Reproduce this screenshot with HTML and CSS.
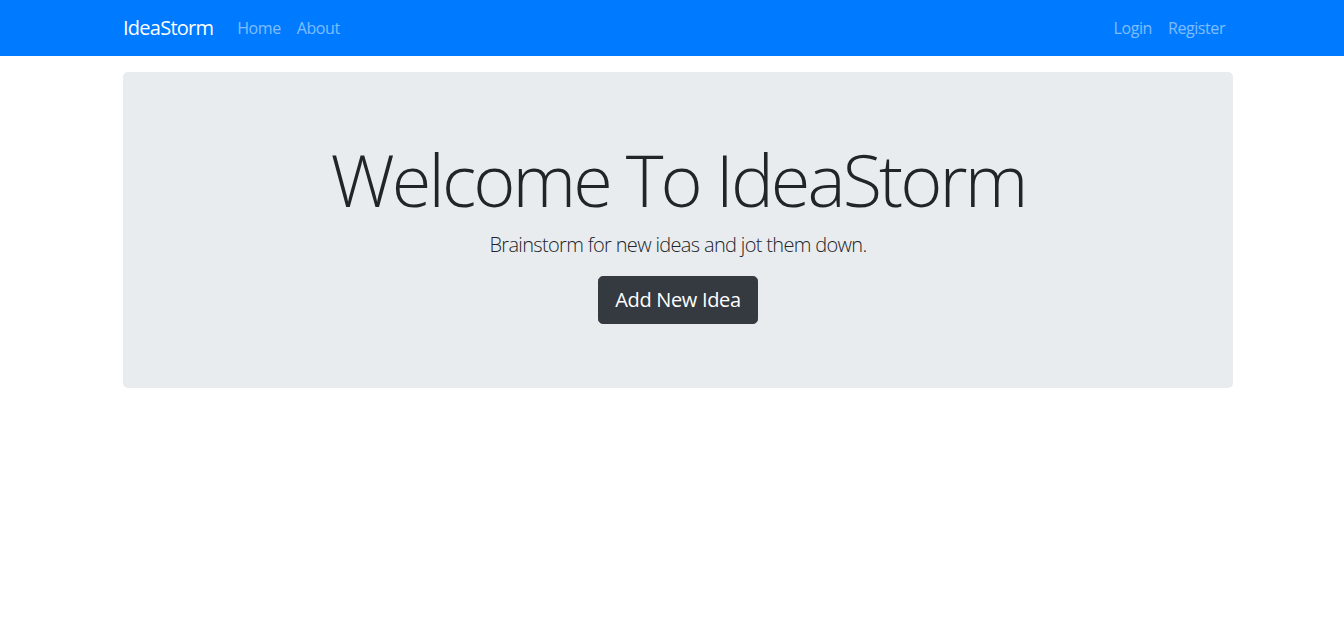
FILE: index.html
```html
<!DOCTYPE html>
<html lang="en">
<head>
<meta charset="utf-8">
<title>IdeaStorm</title>
<link rel="stylesheet" href="styles.css">
</head>
<body>
<nav class="navbar">
  <div class="container nav-inner">
    <a class="brand" href="#">IdeaStorm</a>
    <ul class="nav-links">
      <li><a href="#">Home</a></li>
      <li><a href="#">About</a></li>
    </ul>
    <ul class="nav-links nav-right">
      <li><a href="#">Login</a></li>
      <li><a href="#">Register</a></li>
    </ul>
  </div>
</nav>
<main class="container page">
  <section class="jumbotron">
    <h1 class="display">Welcome To IdeaStorm</h1>
    <p class="lead">Brainstorm for new ideas and jot them down.</p>
    <a class="btn" href="#">Add New Idea</a>
  </section>
</main>
</body>
</html>
```

FILE: styles.css
```css
* { box-sizing: border-box; }
html, body { margin: 0; padding: 0; }
body {
  font-family: "Open Sans", "Noto Sans", sans-serif;
  font-size: 16px;
  line-height: 1.5;
  color: #212529;
  background: #fff;
  padding-left: 12px;
}
a { text-decoration: none; }
.container {
  width: 1110px;
  margin: 0 auto;
}
.navbar {
  background: #007bff;
  height: 56px;
  margin-left: -12px;
  padding-left: 12px;
}
.nav-inner {
  display: flex;
  align-items: center;
  height: 56px;
}
.brand {
  color: #fff;
  font-size: 20px;
  line-height: 30px;
  letter-spacing: -0.75px;
  margin-right: 16px;
}
.nav-links {
  display: flex;
  list-style: none;
  margin: 0;
  padding: 0;
}
.nav-links a {
  display: block;
  padding: 8px;
  color: rgba(255,255,255,.5);
  font-size: 16px;
  line-height: 24px;
  letter-spacing: -0.42px;
}
.nav-right { margin-left: auto; }
.page { padding-top: 16px; }
.jumbotron {
  background: #e9ecef;
  border-radius: 4.8px;
  padding: 64px 32px;
  text-align: center;
}
.display {
  font-size: 72px;
  font-weight: 300;
  line-height: 1.2;
  letter-spacing: -2.9px;
  margin: 0 0 8px;
}
.lead {
  font-size: 20px;
  font-weight: 300;
  line-height: 30px;
  letter-spacing: -0.67px;
  margin: 0 0 16px;
}
.btn {
  display: inline-block;
  background: #343a40;
  border: 1px solid #343a40;
  color: #fff;
  font-size: 20px;
  line-height: 30px;
  letter-spacing: -0.33px;
  padding: 8px 16px;
  border-radius: 4.8px;
  vertical-align: top;
}
```
